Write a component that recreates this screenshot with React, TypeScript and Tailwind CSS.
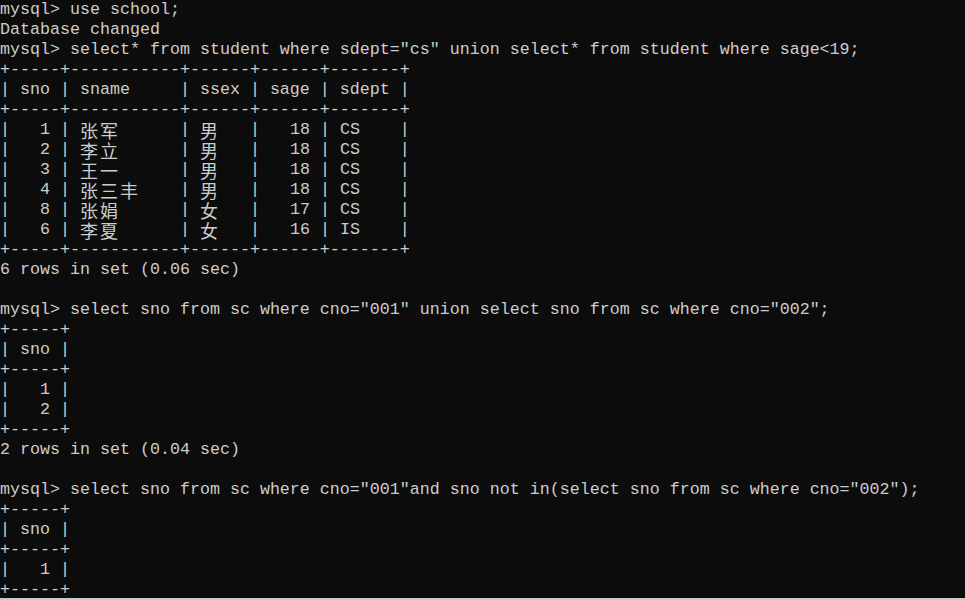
import React from "react";

const lines: string[] = [
    "mysql> use school;",
    "Database changed",
    'mysql> select* from student where sdept="cs" union select* from student where sage<19;',
    "+-----+-----------+------+------+-------+",
    "| sno | sname     | ssex | sage | sdept |",
    "+-----+-----------+------+------+-------+",
    "|   1 | 张军      | 男   |   18 | CS    |",
    "|   2 | 李立      | 男   |   18 | CS    |",
    "|   3 | 王一      | 男   |   18 | CS    |",
    "|   4 | 张三丰    | 男   |   18 | CS    |",
    "|   8 | 张娟      | 女   |   17 | CS    |",
    "|   6 | 李夏      | 女   |   16 | IS    |",
    "+-----+-----------+------+------+-------+",
    "6 rows in set (0.06 sec)",
    "",
    'mysql> select sno from sc where cno="001" union select sno from sc where cno="002";',
    "+-----+",
    "| sno |",
    "+-----+",
    "|   1 |",
    "|   2 |",
    "+-----+",
    "2 rows in set (0.04 sec)",
    "",
    'mysql> select sno from sc where cno="001"and sno not in(select sno from sc where cno="002");',
    "+-----+",
    "| sno |",
    "+-----+",
    "|   1 |",
    "+-----+",
];

const isWide = (ch: string) => /[\u3000-\u9fff\uff00-\uffef]/.test(ch);

// console cells are 10px; wide chars take two of them
function Line({ text }: { text: string }) {
    const parts: React.ReactNode[] = [];
    let run = "";
    Array.from(text).forEach((ch, i) => {
        if (isWide(ch)) {
            if (run) parts.push(run);
            run = "";
            parts.push(
                <span
                    key={i}
                    className="inline-block w-[20px] align-top text-[18px] leading-[20px] font-['Noto_Sans_CJK_SC',sans-serif]"
                >
                    {ch}
                </span>
            );
        } else {
            run += ch;
        }
    });
    if (run) parts.push(run);
    return <div className="h-[20px] whitespace-pre leading-[20px]">{parts}</div>;
}

export default function App() {
    return (
        <div className="flex h-[600px] w-full flex-col overflow-hidden bg-[#0c0c0c]">
            <div className="h-[598px] overflow-hidden font-['Liberation_Mono',monospace] text-[16.667px] text-[#cccccc]">
                {lines.map((l, i) => (
                    <Line key={i} text={l} />
                ))}
            </div>
            <div className="h-[2px] bg-[#c9c9c9]"></div>
        </div>
    );
}
